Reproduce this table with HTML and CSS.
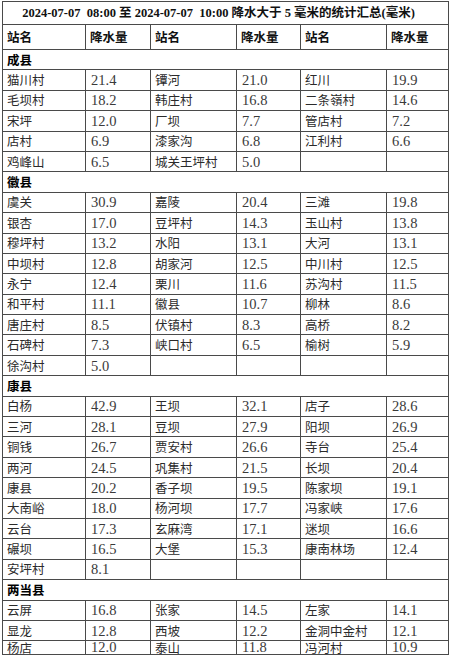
FILE: index.html
```html
<!DOCTYPE html>
<html lang="zh-CN">
<head>
<meta charset="utf-8">
<title>降水统计汇总</title>
<link rel="stylesheet" href="styles.css">
</head>
<body>
<div class="page">
<table class="rain">
<colgroup>
<col class="c1"><col class="c2"><col class="c3"><col class="c4"><col class="c5"><col class="c6">
</colgroup>
<tbody>
<tr class="title"><td colspan="6">2024-07-07&nbsp; 08:00 至 2024-07-07&nbsp; 10:00 降水大于 5 毫米的统计汇总(毫米)</td></tr>
<tr class="head"><td>站名</td><td>降水量</td><td>站名</td><td>降水量</td><td>站名</td><td>降水量</td></tr>

<tr class="sec"><td colspan="6">成县</td></tr>
<tr><td>猫川村</td><td class="n">21.4</td><td>镡河</td><td class="n">21.0</td><td>红川</td><td class="n">19.9</td></tr>
<tr><td>毛坝村</td><td class="n">18.2</td><td>韩庄村</td><td class="n">16.8</td><td>二条嶺村</td><td class="n">14.6</td></tr>
<tr><td>宋坪</td><td class="n">12.0</td><td>厂坝</td><td class="n">7.7</td><td>管店村</td><td class="n">7.2</td></tr>
<tr><td>店村</td><td class="n">6.9</td><td>漆家沟</td><td class="n">6.8</td><td>江利村</td><td class="n">6.6</td></tr>
<tr><td>鸡峰山</td><td class="n">6.5</td><td>城关王坪村</td><td class="n">5.0</td><td></td><td></td></tr>

<tr class="sec"><td colspan="6">徽县</td></tr>
<tr><td>虞关</td><td class="n">30.9</td><td>嘉陵</td><td class="n">20.4</td><td>三滩</td><td class="n">19.8</td></tr>
<tr><td>银杏</td><td class="n">17.0</td><td>豆坪村</td><td class="n">14.3</td><td>玉山村</td><td class="n">13.8</td></tr>
<tr><td>穆坪村</td><td class="n">13.2</td><td>水阳</td><td class="n">13.1</td><td>大河</td><td class="n">13.1</td></tr>
<tr><td>中坝村</td><td class="n">12.8</td><td>胡家河</td><td class="n">12.5</td><td>中川村</td><td class="n">12.5</td></tr>
<tr><td>永宁</td><td class="n">12.4</td><td>栗川</td><td class="n">11.6</td><td>苏沟村</td><td class="n">11.5</td></tr>
<tr><td>和平村</td><td class="n">11.1</td><td>徽县</td><td class="n">10.7</td><td>柳林</td><td class="n">8.6</td></tr>
<tr><td>唐庄村</td><td class="n">8.5</td><td>伏镇村</td><td class="n">8.3</td><td>高桥</td><td class="n">8.2</td></tr>
<tr><td>石碑村</td><td class="n">7.3</td><td>峡口村</td><td class="n">6.5</td><td>榆树</td><td class="n">5.9</td></tr>
<tr><td>徐沟村</td><td class="n">5.0</td><td></td><td></td><td></td><td></td></tr>

<tr class="sec"><td colspan="6">康县</td></tr>
<tr><td>白杨</td><td class="n">42.9</td><td>王坝</td><td class="n">32.1</td><td>店子</td><td class="n">28.6</td></tr>
<tr><td>三河</td><td class="n">28.1</td><td>豆坝</td><td class="n">27.9</td><td>阳坝</td><td class="n">26.9</td></tr>
<tr><td>铜钱</td><td class="n">26.7</td><td>贾安村</td><td class="n">26.6</td><td>寺台</td><td class="n">25.4</td></tr>
<tr><td>两河</td><td class="n">24.5</td><td>巩集村</td><td class="n">21.5</td><td>长坝</td><td class="n">20.4</td></tr>
<tr><td>康县</td><td class="n">20.2</td><td>香子坝</td><td class="n">19.5</td><td>陈家坝</td><td class="n">19.1</td></tr>
<tr><td>大南峪</td><td class="n">18.0</td><td>杨河坝</td><td class="n">17.7</td><td>冯家峡</td><td class="n">17.6</td></tr>
<tr><td>云台</td><td class="n">17.3</td><td>玄麻湾</td><td class="n">17.1</td><td>迷坝</td><td class="n">16.6</td></tr>
<tr><td>碾坝</td><td class="n">16.5</td><td>大堡</td><td class="n">15.3</td><td>康南林场</td><td class="n">12.4</td></tr>
<tr><td>安坪村</td><td class="n">8.1</td><td></td><td></td><td></td><td></td></tr>

<tr class="sec"><td colspan="6">两当县</td></tr>
<tr><td>云屏</td><td class="n">16.8</td><td>张家</td><td class="n">14.5</td><td>左家</td><td class="n">14.1</td></tr>
<tr><td>显龙</td><td class="n">12.8</td><td>西坡</td><td class="n">12.2</td><td>金洞中金村</td><td class="n">12.1</td></tr>
<tr class="last"><td>杨店</td><td class="n">12.0</td><td>泰山</td><td class="n">11.8</td><td>冯河村</td><td class="n">10.9</td></tr>
</tbody>
</table>
</div>
</body>
</html>
```

FILE: styles.css
```css
html, body {
  margin: 0;
  padding: 0;
  background: #ffffff;
}

.page {
  padding: 1px 0 0 2px;
}

.rain {
  border-collapse: collapse;
  table-layout: fixed;
  width: 446px;
  font-family: "Noto Sans CJK SC", "Liberation Serif", serif;
  font-size: 12.5px;
  color: #2a2a2a;
}

.c1 { width: 83px; }
.c2 { width: 65px; }
.c3 { width: 86px; }
.c4 { width: 64px; }
.c5 { width: 86px; }
.c6 { width: 62px; }

.rain td {
  border: 1px solid #4a4a4a;
  height: 19.4px;
  padding: 0 0 0 4px;
  line-height: 16px;
  white-space: nowrap;
  overflow: hidden;
  vertical-align: middle;
}

.rain td.n {
  font-family: "Liberation Serif", "Noto Sans CJK SC", serif;
  font-size: 14.5px;
  color: #3a3a3a;
  padding-left: 5px;
}

.rain .title td {
  height: 22px;
  text-align: center;
  font-family: "Liberation Serif", "Noto Sans CJK SC", serif;
  font-weight: bold;
  font-size: 12.5px;
  color: #111;
  padding: 0 14px 0 0;
}

.rain .head td {
  height: 24px;
  font-weight: bold;
  color: #111;
  font-size: 12.5px;
}

.rain .sec td {
  font-weight: bold;
  color: #000;
  font-size: 12.5px;
}

.rain .last td {
  height: 13px;
  line-height: 13px;
  vertical-align: bottom;
  overflow: visible;
}
```
